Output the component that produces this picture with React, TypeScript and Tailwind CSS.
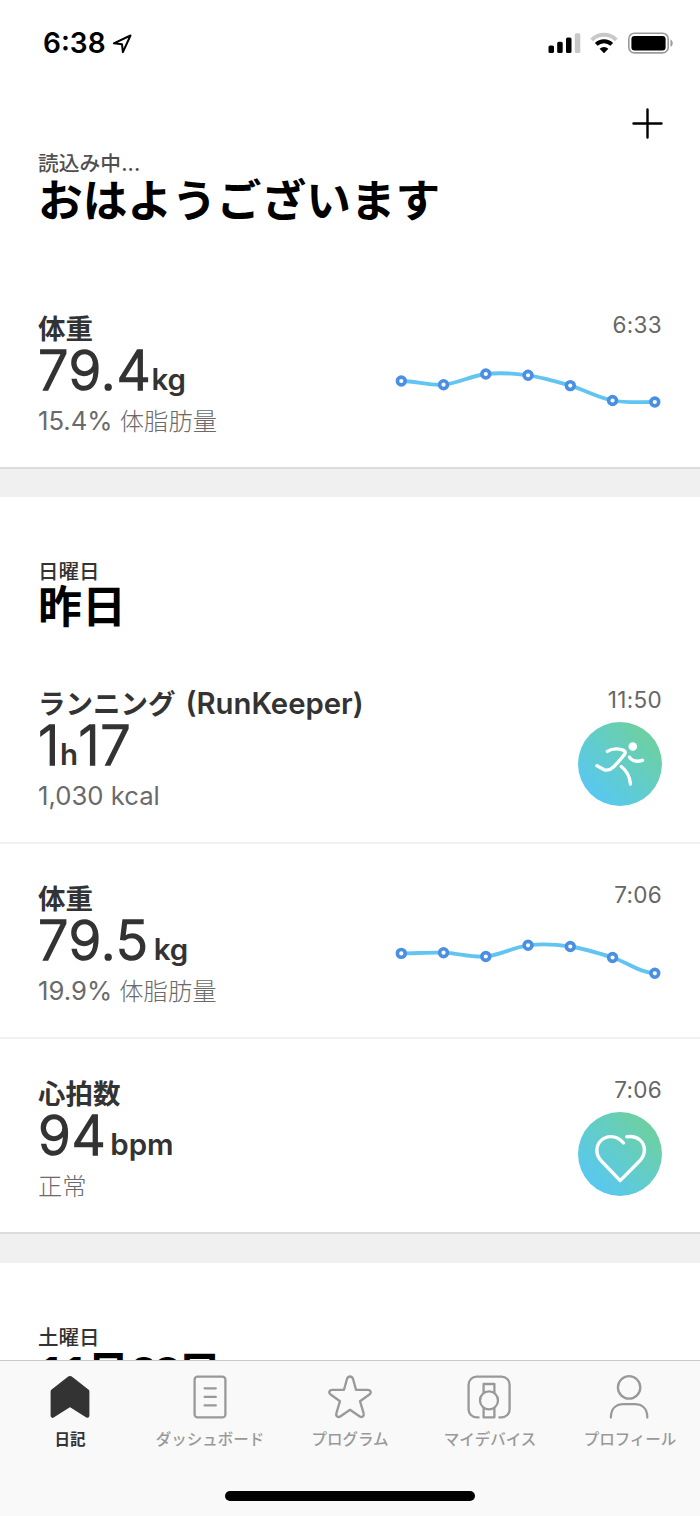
import type { ReactNode } from 'react'

type Entry = {
  title: string
  latinTitle?: string
  time: string
  value: ReactNode
  detail: ReactNode
  aside: ReactNode
}

const CHART_STEP = 42.25

/** Smooth line through the points, flat at both ends. */
function linePath(values: number[]) {
  const pts = values.map((y, i) => [7.3 + i * CHART_STEP, y])
  const slope = (i: number) =>
    i === 0 || i === values.length - 1 ? 0 : (values[i + 1] - values[i - 1]) / 2
  let d = `M${pts[0][0]} ${pts[0][1]}`
  for (let i = 1; i < pts.length; i++) {
    const [x0, y0] = pts[i - 1]
    const [x1, y1] = pts[i]
    const third = CHART_STEP / 3
    d += `C${x0 + third} ${y0 + slope(i - 1) / 3} ${x1 - third} ${y1 - slope(i) / 3} ${x1} ${y1}`
  }
  return d
}

function Sparkline({ values }: { values: number[] }) {
  return (
    <svg width="268" height="60" viewBox="0 0 268 60" fill="none" className="mt-[13px]">
      <path d={linePath(values)} stroke="#62c4f0" strokeWidth="3.8" />
      {values.map((y, i) => (
        <circle key={i} cx={7.3 + i * CHART_STEP} cy={y} r="3.9" fill="#fff" stroke="#4a8fe2" strokeWidth="3.6" />
      ))}
    </svg>
  )
}

function Badge({ children }: { children: ReactNode }) {
  return (
    <div className="mt-[7px] size-[84px] rounded-full bg-linear-to-tr from-[#57c7f5] from-10% to-[#6fd09a] to-90%">
      <svg width="84" height="84" viewBox="0 0 84 84" fill="none" stroke="#fff" strokeWidth="3.4" strokeLinecap="round" strokeLinejoin="round">
        {children}
      </svg>
    </div>
  )
}

function RunBadge() {
  return (
    <Badge>
      <circle cx="54.8" cy="24.5" r="4.3" fill="#fff" stroke="none" />
      <path d="M51.5 35.2C53.8 38.8 58 40.2 64.4 38.3" />
      <path d="M29.4 29.4C33.5 26.8 40 26.6 44.4 27.8C47.6 28.7 48 30.8 46 33.2C42.5 37.3 39 41.6 35.4 45C31.5 48.6 29 49 25.8 47.4L18.9 43.7" />
      <path d="M43.2 44.5C48.7 48.8 51.9 54.2 52.5 62" />
    </Badge>
  )
}

function HeartBadge() {
  return (
    <Badge>
      <path d="M45.5 31C42 26.8 37.6 24.6 32.8 24.6C25 24.6 18.9 30.8 18.9 38.3C18.9 42.5 20.4 46 23.4 49L42.2 68.6L61.3 49.3C64.6 46 66.4 42.3 66.4 38C66.4 30 59.6 23 48.8 24.8" />
    </Badge>
  )
}

function Num({ children }: { children: ReactNode }) {
  return <span className="text-[54.5px] font-light tracking-[0.6px] [-webkit-text-stroke:1.6px_#333]">{children}</span>
}

function Unit({ children }: { children: ReactNode }) {
  return <span className="text-[29.5px] font-semibold">{children}</span>
}

function Kanji({ children }: { children: ReactNode }) {
  return <span className="text-[24.3px] font-light">{children}</span>
}

const today: Entry[] = [
  {
    title: '体重',
    time: '6:33',
    value: <><Num>79.4</Num><Unit>kg</Unit></>,
    detail: <>15.4% <Kanji>体脂肪量</Kanji></>,
    aside: <Sparkline values={[28, 31.7, 21, 22.3, 32.6, 47.5, 49]} />,
  },
]

const yesterday: Entry[] = [
  {
    title: 'ランニング',
    latinTitle: '(RunKeeper)',
    time: '11:50',
    value: <><Num>1</Num><Unit>h</Unit><Num>17</Num></>,
    detail: '1,030 kcal',
    aside: <RunBadge />,
  },
  {
    title: '体重',
    time: '7:06',
    value: <><Num>79.5</Num><span className="w-[5px]" /><Unit>kg</Unit></>,
    detail: <>19.9% <Kanji>体脂肪量</Kanji></>,
    aside: <Sparkline values={[30.4, 29.7, 33.5, 22.3, 23.5, 34.5, 50.3]} />,
  },
  {
    title: '心拍数',
    time: '7:06',
    value: <><Num>94</Num><span className="w-[4px]" /><Unit>bpm</Unit></>,
    detail: <Kanji>正常</Kanji>,
    aside: <HeartBadge />,
  },
]

function EntryRow({ entry }: { entry: Entry }) {
  return (
    <div className="flex h-[195px] justify-between border-b-2 border-[#f0f1f4] pr-[38px] pl-[38px] last:border-[#dcdcdc]">
      <div className="pt-[39px] whitespace-nowrap text-[#333]">
        <div className="flex h-[28px] items-baseline gap-[10px] text-[27.5px] leading-8 font-bold">
          {entry.title}
          {entry.latinTitle && <span className="text-[29.3px] font-semibold">{entry.latinTitle}</span>}
        </div>
        <div className="flex h-[62px] items-baseline leading-[58px]">{entry.value}</div>
        <div className="h-9 text-[25.7px] leading-9 text-[#6a6a6a]">{entry.detail}</div>
      </div>
      <div className="flex flex-col items-end pt-[36px]">
        <div className="h-[30px] text-[22.5px] leading-[30px] tracking-[0.3px] text-[#666]">{entry.time}</div>
        {entry.aside}
      </div>
    </div>
  )
}

function DayHeader({ day, title }: { day: string; title: ReactNode }) {
  return (
    <div className="h-[152px] pt-[61px] pl-[38px] whitespace-nowrap">
      <div className="h-[27px] text-[20.5px] leading-7 font-medium text-[#333]">{day}</div>
      <h2 className="h-[44px] text-[44px] leading-[44px] font-bold text-black">{title}</h2>
    </div>
  )
}

function DateDigits({ children }: { children: ReactNode }) {
  return <span className="tracking-[-4.6px] tabular-nums">{children}</span>
}

function StatusBar() {
  return (
    <div className="flex h-[85px] items-start justify-between pt-[26px] pr-[27px] pl-[43px]">
      <div className="flex items-center gap-[7px]">
        <span className="text-[28px] leading-[35px] font-semibold">6:38</span>
        <svg width="20" height="20" viewBox="0 0 20 20" fill="none" stroke="#000" strokeWidth="2" strokeLinejoin="round">
          <path d="M0.8 9.3L17.5 1.5L9.9 18.2L9 10.2Z" />
        </svg>
      </div>
      <svg width="125" height="34" viewBox="548 26 125 34" fill="none">
        <rect x="548.5" y="45.5" width="5.5" height="7.5" rx="1.6" fill="#000" />
        <rect x="557.2" y="41.8" width="5.5" height="11.2" rx="1.6" fill="#000" />
        <rect x="566" y="37.5" width="5.5" height="15.5" rx="1.6" fill="#000" />
        <rect x="574.8" y="33.2" width="5.5" height="19.8" rx="1.6" fill="#c8c8c8" />
        <path d="M591.7 39.8A17.5 17.5 0 0 1 616.3 39.8" stroke="#c8c8c8" strokeWidth="4" />
        <path d="M596.3 44.4A11 11 0 0 1 611.7 44.4" stroke="#000" strokeWidth="4" />
        <path d="M599.6 48.8A6.4 6.4 0 0 1 608.4 48.8L604 53.2Z" fill="#000" />
        <rect x="628.8" y="33.3" width="39.4" height="19.6" rx="5.6" stroke="#9a9a9a" strokeWidth="1.6" />
        <rect x="631.4" y="36" width="34.2" height="14.4" rx="3.2" fill="#000" />
        <path d="M670.5 39.5C673.4 40.5 673.4 46 670.5 46.8Z" fill="#9a9a9a" />
      </svg>
    </div>
  )
}

const tabs: { label: string; icon: ReactNode }[] = [
  {
    label: '日記',
    icon: <path fill="#333" strokeWidth="4" stroke="#333" d="M22 3Q22.6 3 23.2 3.5L39.4 16.4V40.8L23.2 30.6Q22 29.8 20.8 30.6L4.6 40.8V16.4L20.8 3.5Q21.4 3 22 3Z" />,
  },
  {
    label: 'ダッシュボード',
    icon: (
      <>
        <rect x="6.6" y="1.6" width="30.8" height="40.8" rx="3" />
        <path d="M16.6 13.3h11.2M16.6 21.9h11.2M16.6 30.4h11.2" />
      </>
    ),
  },
  {
    label: 'プログラム',
    icon: (
      <path d="M18.9 4.2C19.9 0.6 24.1 0.6 25.1 4.2L28 14.8H39.6C42.8 14.8 43.8 17.8 41.4 19.5L32 26.2L35.6 38.2C36.4 41.4 33.8 43 31.4 41.3L22 34.8L12.6 41.3C10.2 43 7.6 41.4 8.4 38.2L12 26.2L2.6 19.5C0.2 17.8 1.2 14.8 4.4 14.8H16Z" />
    ),
  },
  {
    label: 'マイデバイス',
    icon: (
      <>
        <path d="M10.6 42.4H8.6A8 8 0 0 1 0.6 34.4V9.6A8 8 0 0 1 8.6 1.6H33.6A8 8 0 0 1 41.6 9.6V34.4A8 8 0 0 1 33.6 42.4H31.4" />
        <circle cx="21" cy="25.4" r="9" />
        <path d="M15.6 17.6V9h10.8V17.6M15.6 33.2V42.3h10.8V33.2" />
      </>
    ),
  },
  {
    label: 'プロフィール',
    icon: (
      <>
        <circle cx="21.1" cy="12.4" r="11.2" />
        <path d="M2.9 42.5C2.9 33 8.6 29.2 15.6 29.2H26.6C33.6 29.2 39.3 33 39.3 42.5" />
      </>
    ),
  },
]

function TabBar() {
  return (
    <nav className="flex h-[156px] shrink-0 flex-col items-center border-t-[1.5px] border-[#c9c9c9] bg-[#f9f9f9]">
      <div className="flex h-[130px] w-full">
        {tabs.map((tab, i) => (
          <div key={tab.label} className="flex flex-1 flex-col items-center pt-[14px] whitespace-nowrap">
            <svg width="44" height="44" viewBox="0 0 44 44" fill="none" stroke="#999" strokeWidth="2.3" strokeLinecap="round" strokeLinejoin="round" className="overflow-visible">
              {tab.icon}
            </svg>
            <span className={`mt-[11px] text-[15.5px] leading-5 ${i === 0 ? 'font-bold text-[#333]' : 'font-medium text-[#999]'}`}>
              {tab.label}
            </span>
          </div>
        ))}
      </div>
      <div className="h-[10px] w-[250px] rounded-full bg-black" />
    </nav>
  )
}

export default function App() {
  return (
    <div className="flex h-[1516px] w-[700px] flex-col overflow-hidden bg-white font-['Inter','Noto_Sans_CJK_JP',sans-serif]">
      <main className="min-h-0 flex-1 overflow-hidden">
        <StatusBar />
        <header className="h-[189px] pr-[37px] pl-[38px]">
          <div className="flex h-[65px] justify-end pt-[23px]">
            <svg width="31" height="31" viewBox="0 0 31 31" stroke="#000" strokeWidth="2.4" strokeLinecap="round">
              <path d="M15.5 1.5v28M1.5 15.5h28" />
            </svg>
          </div>
          <div className="h-[27px] text-[20.7px] leading-7 font-medium tracking-[0.1px] text-[#505050]">読込み中...</div>
          <h1 className="h-12 text-[44.7px] leading-[48px] font-bold whitespace-nowrap text-black">おはようございます</h1>
        </header>
        <section>
          {today.map(e => <EntryRow key={e.title} entry={e} />)}
        </section>
        <div className="h-[28px] bg-[#f0f0f0]" />
        <section>
          <DayHeader day="日曜日" title="昨日" />
          {yesterday.map(e => <EntryRow key={e.title} entry={e} />)}
        </section>
        <div className="h-[29px] bg-[#f0f0f0]" />
        <DayHeader
          day="土曜日"
          title={<><DateDigits>11</DateDigits>月<DateDigits>23</DateDigits>日</>}
        />
      </main>
      <TabBar />
    </div>
  )
}
